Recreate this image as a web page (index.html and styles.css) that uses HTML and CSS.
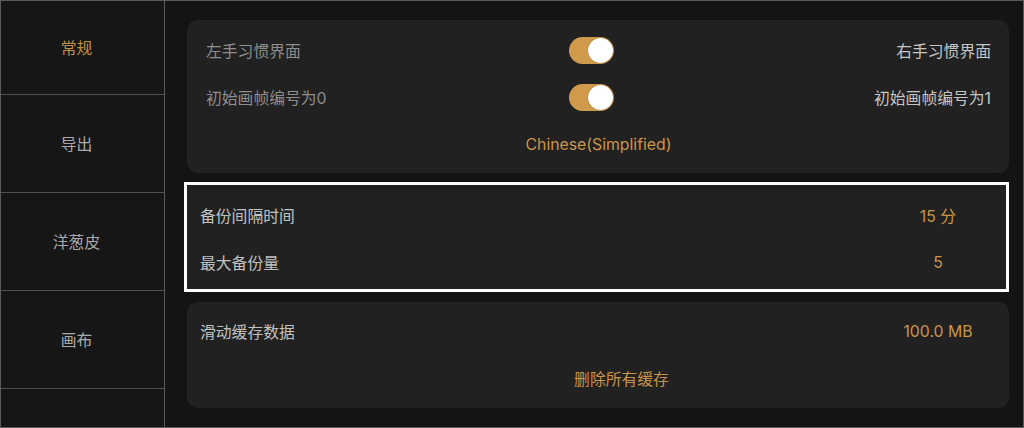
FILE: index.html
```html
<!DOCTYPE html>
<html lang="zh-CN">
<head>
<meta charset="utf-8">
<title>设置</title>
<link rel="stylesheet" href="styles.css">
</head>
<body>
<div class="frame">
  <nav class="sidebar">
    <div class="tab tab-first active">常规</div>
    <div class="tab">导出</div>
    <div class="tab">洋葱皮</div>
    <div class="tab">画布</div>
  </nav>
  <main class="content">
    <section class="panel panel-general">
      <div class="row-toggle">
        <span class="dim">左手习惯界面</span>
        <span class="toggle"><span class="knob"></span></span>
        <span class="right-label">右手习惯界面</span>
      </div>
      <div class="row-toggle">
        <span class="dim">初始画帧编号为0</span>
        <span class="toggle"><span class="knob"></span></span>
        <span class="right-label">初始画帧编号为1</span>
      </div>
      <div class="row-center gold">Chinese(Simplified)</div>
    </section>
    <section class="panel panel-backup">
      <div class="row-value">
        <span class="label">备份间隔时间</span>
        <span class="value gold">15 分</span>
      </div>
      <div class="row-value">
        <span class="label">最大备份量</span>
        <span class="value gold">5</span>
      </div>
    </section>
    <section class="panel panel-cache">
      <div class="row-value">
        <span class="label">滑动缓存数据</span>
        <span class="value gold">100.0 MB</span>
      </div>
      <div class="row-center row-shift gold">删除所有缓存</div>
    </section>
  </main>
</div>
</body>
</html>
```

FILE: styles.css
```css
* { box-sizing: border-box; }
html, body {
  margin: 0;
  padding: 0;
  background: #141414;
}
body {
  font-family: Inter, "Noto Sans CJK SC", sans-serif;
  font-size: 15.8px;
  width: 1024px;
  height: 428px;
  overflow: hidden;
}
.frame {
  width: 1024px;
  height: 428px;
  border: 1px solid #5a5a5a;
  display: flex;
  background: #141414;
}
.sidebar {
  width: 164px;
  flex: none;
  background: #161616;
  border-right: 1px solid #5a5a5a;
  display: flex;
  flex-direction: column;
}
.tab {
  height: 98px;
  border-bottom: 1px solid #4e4e4e;
  display: flex;
  align-items: center;
  justify-content: center;
  padding-right: 12px;
  color: #a9a9a9;
  font-size: 15.8px;
}
.tab-first { height: 94px; }
.tab.active { color: #c1904a; }

.content {
  flex: 1;
  padding: 19px 14px 0 22px;
  display: flex;
  flex-direction: column;
  gap: 9px;
}
.panel {
  background: #212121;
  border-radius: 11px;
}
.panel-general {
  padding: 7px 18px 5px 19px;
}
.row-toggle {
  height: 47px;
  display: grid;
  grid-template-columns: 1fr auto 1fr;
  align-items: center;
}
.dim { color: #8e8e8e; }
.right-label { color: #c6c6c6; justify-self: end; }
.toggle {
  width: 45px;
  height: 27px;
  border-radius: 14px;
  background: #cf9a4b;
  position: relative;
  margin-right: 15px;
}
.knob {
  position: absolute;
  right: 1px;
  top: 1px;
  width: 25px;
  height: 25px;
  border-radius: 50%;
  background: #ffffff;
  box-shadow: 0 0 1px rgba(0,0,0,0.5);
}
.row-center {
  height: 47px;
  display: flex;
  align-items: center;
  justify-content: center;
}
.row-shift { padding-left: 52px; }
.gold { color: #c9954b; }

.panel-backup {
  border-radius: 0;
  border: 3px solid #ffffff;
  margin-left: -3px;
  padding: 7px 15px 3px 13px;
  background: #212121;
}
.panel-cache {
  margin-top: 1px;
  padding: 6px 18px 6px 13px;
}
.row-value {
  height: 47px;
  display: grid;
  grid-template-columns: 1fr 106px;
  align-items: center;
}
.label { color: #c2c2c2; }
.value { text-align: center; }
```
